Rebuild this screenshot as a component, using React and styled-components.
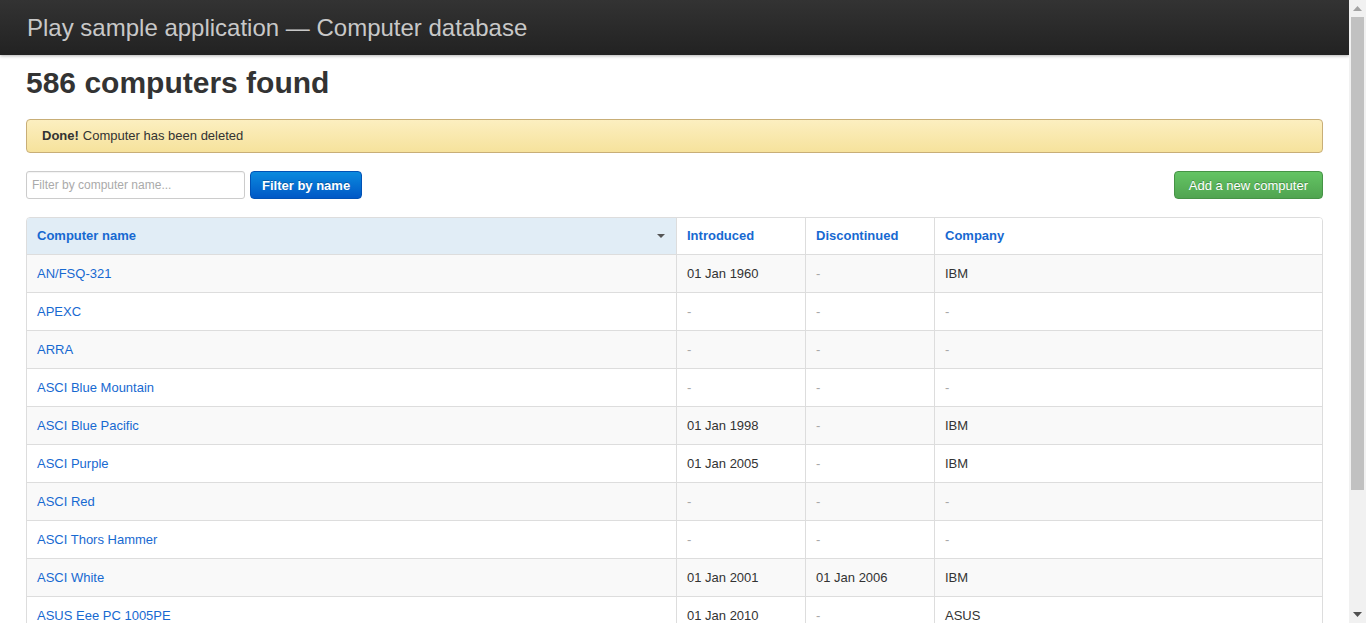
import React from "react";
import styled, { createGlobalStyle } from "styled-components";

const Global = createGlobalStyle`
  html, body { height: 100%; overflow: hidden; }
  body {
    margin: 0;
    font-family: "Liberation Sans", Arial, sans-serif;
    font-size: 13px;
    color: #333;
    background: #fff;
  }
`;

const Frame = styled.div`
  display: flex;
  height: 100vh;
  overflow: hidden;
`;

const Page = styled.div`
  flex: 1;
  min-width: 0;
  overflow: hidden;
`;

const ScrollBar = styled.div`
  width: 17px;
  flex: none;
  display: flex;
  flex-direction: column;
  background: #f1f1f1;
`;

const ScrollArrow = styled.div`
  height: 17px;
  display: flex;
  align-items: center;
  justify-content: center;
`;

const ScrollTrack = styled.div`
  flex: 1;
  padding: 0 2px;
`;

const ScrollThumb = styled.div`
  height: 473px;
  background: #c1c1c1;
`;

const TopBar = styled.header`
  height: 55px;
  background: linear-gradient(to bottom, #333333, #222222);
  box-shadow: 0 1px 3px rgba(0, 0, 0, 0.3);
  display: flex;
  align-items: center;
  padding: 0 27px;
`;

const Brand = styled.a`
  color: #c8c8c8;
  font-size: 24px;
  text-decoration: none;
`;

const Main = styled.main`
  padding: 0 26px 60px;
`;

const Title = styled.h1`
  margin: 10px 0 18px;
  font-size: 30px;
  font-weight: bold;
  color: #333;
  line-height: 36px;
`;

const Alert = styled.div`
  height: 34px;
  box-sizing: border-box;
  padding: 0 15px 2px;
  display: flex;
  align-items: center;
  background: linear-gradient(to bottom, #fcefc0, #f6e29c);
  border: 1px solid #c8ae77;
  border-radius: 4px;
  color: #333;
  font-size: 13px;
  margin-bottom: 18px;
  b { margin-right: 4px; }
`;

const Actions = styled.div`
  display: flex;
  align-items: center;
  justify-content: space-between;
  margin-bottom: 18px;
`;

const FilterForm = styled.form`
  display: flex;
  gap: 5px;
`;

const SearchInput = styled.input`
  width: 219px;
  height: 28px;
  box-sizing: border-box;
  border: 1px solid #cccccc;
  border-radius: 3px;
  padding: 0 5px;
  font-family: inherit;
  font-size: 12px;
  box-shadow: inset 0 1px 1px rgba(0, 0, 0, 0.05);
  &::placeholder { color: #aaa; }
`;

const Button = styled.button`
  height: 28px;
  box-sizing: border-box;
  padding: 0 ${(p) => (p.$bold ? "11px" : "14px")};
  border-radius: 4px;
  font-family: inherit;
  font-size: 13px;
  color: #fff;
  cursor: pointer;
  font-weight: ${(p) => (p.$bold ? "bold" : "normal")};
  border: 1px solid ${(p) => (p.$variant === "success" ? "#469346" : "#0152b5")};
  background: ${(p) =>
    p.$variant === "success"
      ? "linear-gradient(to bottom, #64c464, #50a450)"
      : "linear-gradient(to bottom, #0b8ade, #0058c6)"};
  text-shadow: 0 -1px 0 rgba(0, 0, 0, 0.25);
`;

const Table = styled.table`
  width: 100%;
  table-layout: fixed;
  border-collapse: separate;
  border-spacing: 0;
  border: 1px solid #dddddd;
  border-radius: 4px;
  overflow: hidden;
`;

const HeadCell = styled.th`
  height: 34px;
  text-align: left;
  padding: 0 10px 2px;
  font-weight: bold;
  background: ${(p) => (p.$sorted ? "#e1edf6" : "#fff")};
  border-left: ${(p) => (p.$first ? "none" : "1px solid #dddddd")};
  position: relative;
  a { color: #1769d1; text-decoration: none; }
`;

const Caret = styled.span`
  position: absolute;
  right: 11px;
  top: 16px;
  width: 0;
  height: 0;
  border-left: 4px solid transparent;
  border-right: 4px solid transparent;
  border-top: 4px solid #555;
`;

const Row = styled.tr`
  background: ${(p) => (p.$odd ? "#f9f9f9" : "#fff")};
`;

const Cell = styled.td`
  height: 37px;
  padding: 0 10px;
  border-top: 1px solid #dddddd;
  border-left: ${(p) => (p.$first ? "none" : "1px solid #dddddd")};
  color: ${(p) => (p.$empty ? "#a8a8a8" : "#333")};
  white-space: nowrap;
  a { color: #1769d1; text-decoration: none; }
`;

const Pagination = styled.ul`
  list-style: none;
  margin: 18px 0 0;
  padding: 0;
  display: inline-flex;
  border: 1px solid #dddddd;
  border-radius: 4px;
  box-shadow: 0 1px 2px rgba(0, 0, 0, 0.05);
`;

const PageItem = styled.li`
  padding: 0 14px;
  line-height: 34px;
  color: ${(p) => (p.$disabled ? "#999" : "#1769d1")};
  border-left: ${(p) => (p.$first ? "none" : "1px solid #dddddd")};
`;

const Triangle = ({ up, color }) => (
  <svg width="9" height="5" viewBox="0 0 9 5">
    <polygon points={up ? "4.5,0 9,5 0,5" : "0,0 9,0 4.5,5"} fill={color} />
  </svg>
);

const rows = [
  ["AN/FSQ-321", "01 Jan 1960", "-", "IBM"],
  ["APEXC", "-", "-", "-"],
  ["ARRA", "-", "-", "-"],
  ["ASCI Blue Mountain", "-", "-", "-"],
  ["ASCI Blue Pacific", "01 Jan 1998", "-", "IBM"],
  ["ASCI Purple", "01 Jan 2005", "-", "IBM"],
  ["ASCI Red", "-", "-", "-"],
  ["ASCI Thors Hammer", "-", "-", "-"],
  ["ASCI White", "01 Jan 2001", "01 Jan 2006", "IBM"],
  ["ASUS Eee PC 1005PE", "01 Jan 2010", "-", "ASUS"],
];

export default function App() {
  return (
    <>
      <Global />
      <Frame>
        <Page>
          <TopBar>
            <Brand href="#">Play sample application — Computer database</Brand>
          </TopBar>
          <Main>
            <Title>586 computers found</Title>
            <Alert>
              <b>Done!</b> Computer has been deleted
            </Alert>
            <Actions>
              <FilterForm onSubmit={(e) => e.preventDefault()}>
                <SearchInput placeholder="Filter by computer name..." />
                <Button $bold type="submit">Filter by name</Button>
              </FilterForm>
              <Button $variant="success" type="button">Add a new computer</Button>
            </Actions>
            <Table>
              <colgroup>
                <col style={{ width: 649 }} />
                <col style={{ width: 129 }} />
                <col style={{ width: 129 }} />
                <col />
              </colgroup>
              <thead>
                <tr>
                  <HeadCell $first $sorted>
                    <a href="#">Computer name</a>
                    <Caret />
                  </HeadCell>
                  <HeadCell><a href="#">Introduced</a></HeadCell>
                  <HeadCell><a href="#">Discontinued</a></HeadCell>
                  <HeadCell><a href="#">Company</a></HeadCell>
                </tr>
              </thead>
              <tbody>
                {rows.map((r, i) => (
                  <Row key={r[0]} $odd={i % 2 === 0}>
                    <Cell $first><a href="#">{r[0]}</a></Cell>
                    <Cell $empty={r[1] === "-"}>{r[1]}</Cell>
                    <Cell $empty={r[2] === "-"}>{r[2]}</Cell>
                    <Cell $empty={r[3] === "-"}>{r[3]}</Cell>
                  </Row>
                ))}
              </tbody>
            </Table>
            <Pagination>
              <PageItem $first $disabled>← Previous</PageItem>
              <PageItem $disabled>Displaying 1 to 10 of 586</PageItem>
              <PageItem>Next →</PageItem>
            </Pagination>
          </Main>
        </Page>
        <ScrollBar aria-hidden="true">
          <ScrollArrow><Triangle up color="#a3a3a3" /></ScrollArrow>
          <ScrollTrack><ScrollThumb /></ScrollTrack>
          <ScrollArrow><Triangle color="#505050" /></ScrollArrow>
        </ScrollBar>
      </Frame>
    </>
  );
}
